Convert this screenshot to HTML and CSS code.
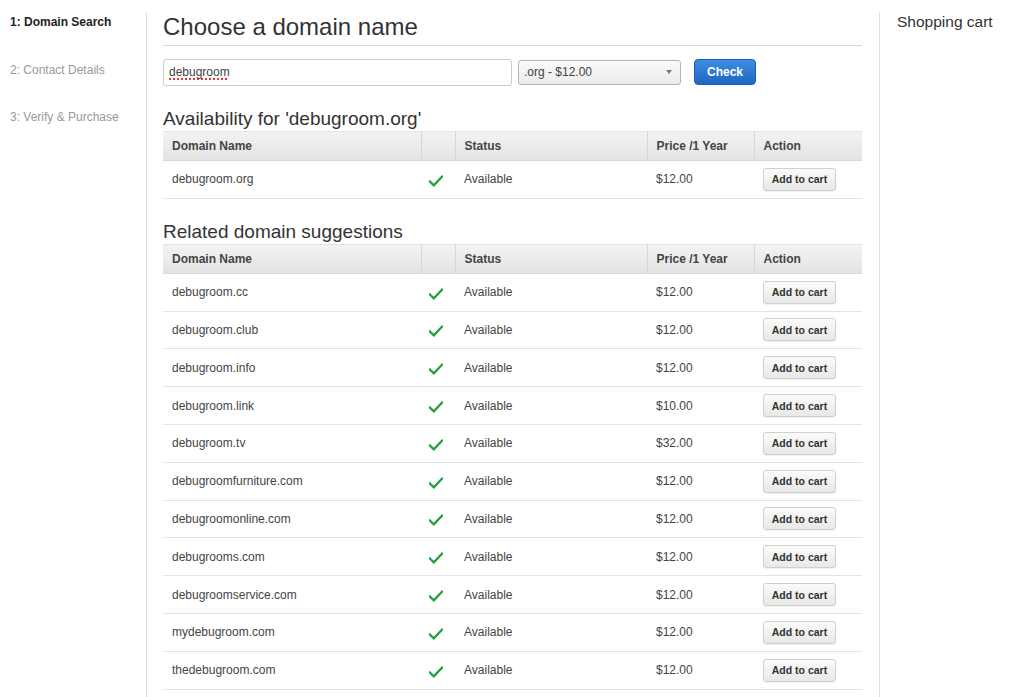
FILE: index.html
```html
<!DOCTYPE html>
<html>
<head>
<meta charset="utf-8">
<link rel="stylesheet" href="styles.css">
</head>
<body>
<div class="page">
  <nav class="steps">
    <div class="step active">1: Domain Search</div>
    <div class="step">2: Contact Details</div>
    <div class="step">3: Verify &amp; Purchase</div>
  </nav>
  <main class="main">
    <h1 class="title">Choose a domain name</h1>
    <form class="search">
      <div class="domain-input"><span class="misspelt">debugroom</span></div>
      <div class="tld-select"><span>.org - $12.00</span><span class="caret"></span></div>
      <button type="button" class="check-btn">Check</button>
    </form>
    <h2 class="section">Availability for 'debugroom.org'</h2>
    <table class="domains">
      <thead><tr><th class="c-name">Domain Name</th><th class="c-icon"></th><th class="c-status">Status</th><th class="c-price">Price /1 Year</th><th class="c-action">Action</th></tr></thead>
      <tbody>
        <tr><td>debugroom.org</td><td class="ic"><svg class="tick" viewBox="0 0 16 13"><path d="M1 7 L5.5 11.5 L15 1.5" fill="none" stroke="#22a03c" stroke-width="2.6" stroke-linecap="square"/></svg></td><td>Available</td><td>$12.00</td><td><button class="cart">Add to cart</button></td></tr>
      </tbody>
    </table>
    <h2 class="section">Related domain suggestions</h2>
    <table class="domains">
      <thead><tr><th class="c-name">Domain Name</th><th class="c-icon"></th><th class="c-status">Status</th><th class="c-price">Price /1 Year</th><th class="c-action">Action</th></tr></thead>
      <tbody id="rows"></tbody>
    </table>
  </main>
  <aside class="cart-col">
    <h3 class="cart-title">Shopping cart</h3>
  </aside>
</div>
<script src="app.js"></script>
</body>
</html>
```
FILE: app.js
```js
var data = [
  ["debugroom.cc", "$12.00"],
  ["debugroom.club", "$12.00"],
  ["debugroom.info", "$12.00"],
  ["debugroom.link", "$10.00"],
  ["debugroom.tv", "$32.00"],
  ["debugroomfurniture.com", "$12.00"],
  ["debugroomonline.com", "$12.00"],
  ["debugrooms.com", "$12.00"],
  ["debugroomservice.com", "$12.00"],
  ["mydebugroom.com", "$12.00"],
  ["thedebugroom.com", "$12.00"]
];
var tick = '<svg class="tick" viewBox="0 0 16 13"><path d="M1 7 L5.5 11.5 L15 1.5" fill="none" stroke="#22a03c" stroke-width="2.6" stroke-linecap="square"/></svg>';
var html = "";
data.forEach(function (d) {
  html += '<tr><td>' + d[0] + '</td><td class="ic">' + tick + '</td><td>Available</td><td>' + d[1] + '</td><td><button class="cart">Add to cart</button></td></tr>';
});
document.getElementById("rows").innerHTML = html;
```
FILE: styles.css
```css
html, body {
  margin: 0;
  padding: 0;
  background: #fff;
}
body {
  font-family: "Liberation Sans", Arial, sans-serif;
  color: #333;
  font-size: 12px;
}
.page {
  display: flex;
  padding-top: 12px;
  min-height: 685px;
}
.steps {
  width: 147px;
  border-right: 1px solid #ddd;
  padding: 3px 0 0 10px;
  box-sizing: border-box;
  flex: none;
}
.step {
  line-height: 15px;
  height: 15px;
  margin-bottom: 32.5px;
  color: #999;
}
.step.active {
  color: #222;
  font-weight: bold;
}
.main {
  width: 733px;
  box-sizing: border-box;
  padding: 0 17px 0 16px;
  border-right: 1px solid #ddd;
  flex: none;
}
.title {
  font-size: 24px;
  font-weight: normal;
  line-height: 30px;
  margin: 0;
  padding-bottom: 3px;
  border-bottom: 1px solid #d8d8d8;
  color: #333;
}
.search {
  display: flex;
  align-items: center;
  margin: 12px 0 0;
  height: 28px;
}
.domain-input {
  width: 349px;
  height: 27px;
  box-sizing: border-box;
  border: 1px solid #ccc;
  border-radius: 3px;
  padding: 0 5px;
  font-size: 12px;
  color: #444;
  display: flex;
  align-items: center;
}
.misspelt {
  text-decoration: underline dotted #e33;
  text-decoration-thickness: 1.5px;
  text-underline-offset: 2px;
}
.tld-select {
  margin-left: 6px;
  width: 163px;
  height: 25px;
  box-sizing: border-box;
  border: 1px solid #b5b5b5;
  border-radius: 3px;
  background: linear-gradient(#fafafa, #ececec);
  display: flex;
  align-items: center;
  justify-content: space-between;
  padding: 0 8px 0 5px;
  color: #444;
  font-size: 12px;
}
.caret {
  width: 0;
  height: 0;
  border-left: 3.5px solid transparent;
  border-right: 3.5px solid transparent;
  border-top: 4px solid #777;
}
.check-btn {
  margin-left: 13px;
  width: 62px;
  height: 26px;
  border: 1px solid #1a5fb0;
  border-radius: 4px;
  background: linear-gradient(#3c8ee0, #1f66c2);
  color: #fff;
  font-weight: bold;
  font-size: 12px;
  font-family: "Liberation Sans", Arial, sans-serif;
  padding: 0;
}
.section {
  font-size: 19px;
  font-weight: normal;
  line-height: 22px;
  margin: 22px 0 0;
  color: #333;
}
.domains {
  width: 100%;
  border-collapse: collapse;
  table-layout: fixed;
  margin-top: 1px;
}
.domains th {
  box-sizing: border-box;
  height: 30px;
  padding: 0 9px;
  text-align: left;
  font-size: 12px;
  font-weight: bold;
  color: #444;
  background: linear-gradient(#f3f3f3, #e3e3e3);
  border-left: 1px solid #fafafa;
  border-right: 1px solid #d6d6d6;
  box-shadow: inset 0 -1px 0 #d8d8d8, inset 0 1px 0 #e4e4e4;
}
.domains th:first-child { border-left: none; }
.domains th:last-child { border-right: none; }
.c-name { width: 258px; }
.c-icon { width: 34px; }
.c-status { width: 192px; }
.c-price { width: 107px; }
.domains td {
  height: 36.8px;
  padding: 0 9px;
  border-bottom: 1px solid #e4e4e4;
  color: #444;
  font-size: 12px;
}
.domains td.ic {
  padding: 0 8px 0 8px;
}
.tick {
  display: block;
  width: 14px;
  height: 12px;
  margin-top: 3px;
}
.cart {
  height: 23px;
  width: 73px;
  padding: 0;
  border: 1px solid #cfcfcf;
  border-radius: 3px;
  background: linear-gradient(#fbfbfb, #e8e8e8);
  font-family: "Liberation Sans", Arial, sans-serif;
  font-size: 10.5px;
  font-weight: bold;
  color: #333;
  box-shadow: 0 1px 1px rgba(0,0,0,0.06);
}
.cart-col {
  padding-left: 17px;
}
.cart-title {
  margin: 0;
  font-size: 15.5px;
  font-weight: normal;
  line-height: 20px;
  color: #333;
}
```
